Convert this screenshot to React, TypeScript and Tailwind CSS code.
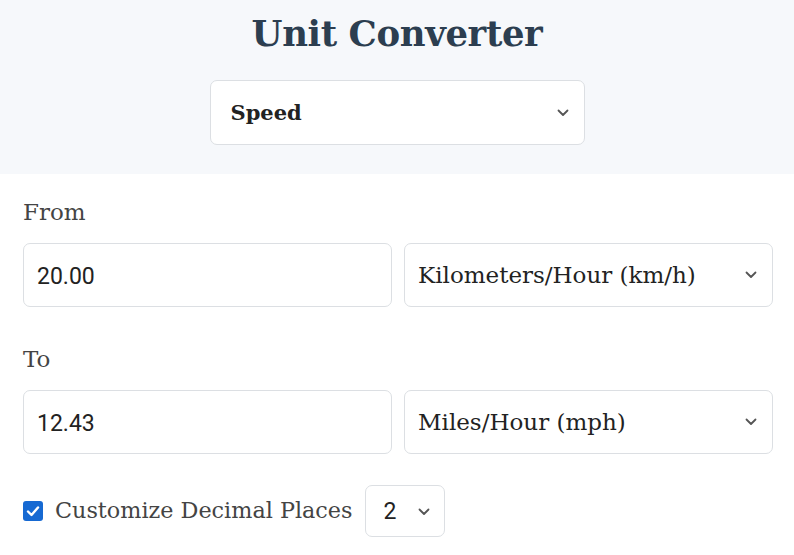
import React from "react";

function Chevron() {
  return (
    <svg width="12" height="8" viewBox="0 0 12 8" fill="none" className="shrink-0">
      <path d="M1.5 1.5 L6 6 L10.5 1.5" stroke="#555" strokeWidth="1.8" strokeLinecap="round" strokeLinejoin="round" />
    </svg>
  );
}

function SelectBox({ label, className }: { label: string; className: string }) {
  return (
    <div className={`flex items-center justify-between bg-white border border-[#dcdfe3] rounded-[7px] ${className}`}>
      <span className="whitespace-nowrap">{label}</span>
      <Chevron />
    </div>
  );
}

export default function App() {
  return (
    <div className="w-[794px] h-[555px] bg-white overflow-hidden font-['DejaVu_Serif',serif] text-[#222]">
      <div className="bg-[#f6f8fb] h-[174px] flex flex-col items-center pt-[10px]">
        <h1 className="text-[35.5px] leading-[48px] font-bold text-[#2c3e50] tracking-[-0.4px]">Unit Converter</h1>
        <SelectBox label="Speed" className="mt-[22px] w-[375px] h-[65px] pl-[20px] pr-[15px] text-[21px] font-semibold text-[#222]" />
      </div>
      <div className="pl-[23px] pr-[21px]">
        <div className="pt-[22px] text-[23px] leading-[32px] text-[#444]">From</div>
        <div className="mt-[15px] grid grid-cols-2 gap-[12px]">
          <div className="h-[64px] border border-[#dcdfe3] rounded-[7px] flex items-center pl-[13px] pt-[4px] text-[23px] font-['Roboto',sans-serif]">20.00</div>
          <SelectBox label="Kilometers/Hour (km/h)" className="h-[64px] pl-[13px] pr-[15px] text-[23px]" />
        </div>
        <div className="pt-[36px] text-[23px] leading-[32px] text-[#444]">To</div>
        <div className="mt-[15px] grid grid-cols-2 gap-[12px]">
          <div className="h-[64px] border border-[#dcdfe3] rounded-[7px] flex items-center pl-[13px] pt-[4px] text-[23px] font-['Roboto',sans-serif]">12.43</div>
          <SelectBox label="Miles/Hour (mph)" className="h-[64px] pl-[13px] pr-[15px] text-[23px]" />
        </div>
        <div className="mt-[31px] flex items-center">
          <div className="w-[20px] h-[20px] rounded-[3px] bg-[#1669d2] flex items-center justify-center">
            <svg width="14" height="12" viewBox="0 0 14 12" fill="none">
              <path d="M2 6.5 L5.5 10 L12 2.5" stroke="white" strokeWidth="2.4" strokeLinecap="round" strokeLinejoin="round" />
            </svg>
          </div>
          <span className="ml-[12px] text-[22.3px] text-[#444]">Customize Decimal Places</span>
          <SelectBox label="2" className="ml-[13px] w-[80px] h-[52px] pl-[17px] pr-[14px] pt-[2px] text-[23px] font-['Roboto',sans-serif]" />
        </div>
      </div>
    </div>
  );
}
